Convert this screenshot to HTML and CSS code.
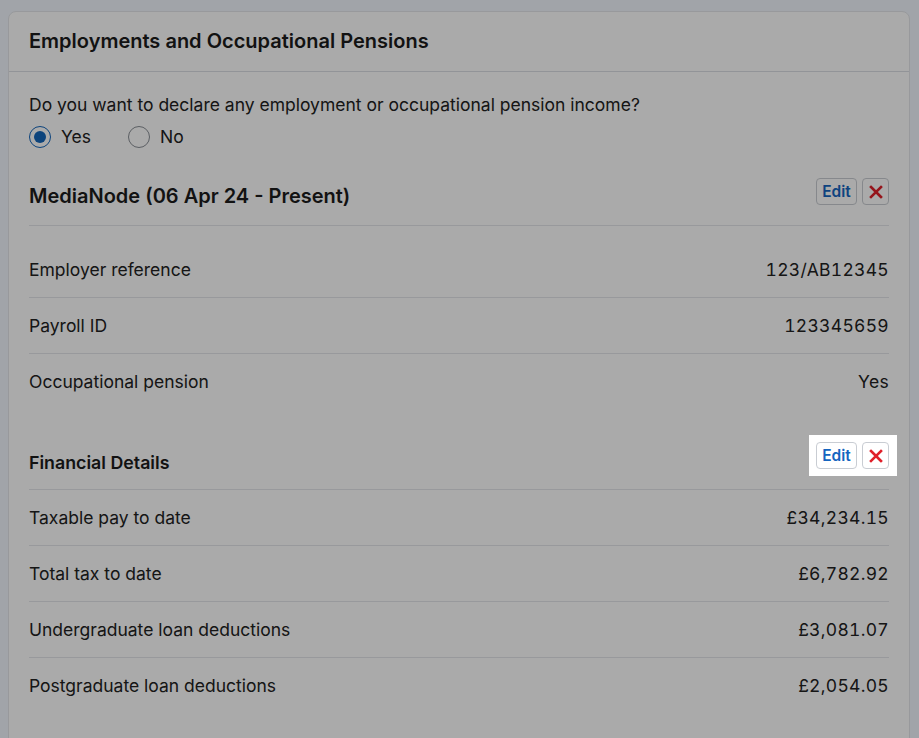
FILE: index.html
```html
<!DOCTYPE html>
<html lang="en">
<head>
    <meta charset="UTF-8">
    <meta name="viewport" content="width=device-width, initial-scale=1.0">
    <title>Employments and Occupational Pensions</title>
    <link rel="stylesheet" href="styles.css">
</head>
<body>

<div class="card">
    <div class="card-header">
        <h2>Employments and Occupational Pensions</h2>
    </div>

    <div class="card-body">
        <p class="question">Do you want to declare any employment or occupational pension income?</p>
        <div class="radio-group">
            <label class="radio"><span class="radio-dot checked"></span> Yes</label>
            <label class="radio"><span class="radio-dot"></span> No</label>
        </div>

        <div class="employment-head">
            <h3>MediaNode (06 Apr 24 - Present)</h3>
            <div class="actions">
                <button class="btn-edit">Edit</button>
                <button class="btn-remove" aria-label="Remove">
                    <svg width="14" height="14" viewBox="0 0 14 14"><path d="M2 2L12 12M12 2L2 12" stroke="currentColor" stroke-width="2.6" stroke-linecap="square"/></svg>
                </button>
            </div>
        </div>

        <div class="detail-list first">
            <div class="detail-row"><span>Employer reference</span><span class="value">123/AB12345</span></div>
            <div class="detail-row"><span>Payroll ID</span><span class="value">123345659</span></div>
            <div class="detail-row"><span>Occupational pension</span><span class="value">Yes</span></div>
        </div>

        <div class="section-head">
            <h4>Financial Details</h4>
            <div class="actions spotlight">
                <button class="btn-edit">Edit</button>
                <button class="btn-remove" aria-label="Remove">
                    <svg width="14" height="14" viewBox="0 0 14 14"><path d="M2 2L12 12M12 2L2 12" stroke="currentColor" stroke-width="2.6" stroke-linecap="square"/></svg>
                </button>
            </div>
        </div>

        <div class="detail-list">
            <div class="detail-row"><span>Taxable pay to date</span><span class="value">£34,234.15</span></div>
            <div class="detail-row"><span>Total tax to date</span><span class="value">£6,782.92</span></div>
            <div class="detail-row"><span>Undergraduate loan deductions</span><span class="value">£3,081.07</span></div>
            <div class="detail-row"><span>Postgraduate loan deductions</span><span class="value">£2,054.05</span></div>
        </div>
    </div>
</div>

</body>
</html>
```

FILE: styles.css
```css
body {
    font-family: 'Inter', 'Liberation Sans', sans-serif;
    margin: 0;
    padding: 11px 9px 0 8px;
    background-color: #f2f6fe;
    color: #222;
    overflow: hidden;
    height: 100vh;
    box-sizing: border-box;
}
.card {
    background-color: #fff;
    border: 1px solid #e4e6ea;
    border-radius: 8px;
    height: 760px;
}
.card-header {
    height: 59px;
    border-bottom: 1px solid #dcdfe4;
    padding: 0 20px;
    display: flex;
    align-items: center;
}
h2 {
    margin: 0 0 2px;
    font-size: 20px;
    font-weight: 600;
    color: #1b1b1b;
}
.card-body {
    padding: 0 20px;
}
.question {
    margin: 22px 0 0;
    font-size: 17.5px;
    line-height: 22px;
}
.radio-group {
    display: flex;
    gap: 37px;
    margin-top: 10px;
}
.radio {
    display: flex;
    align-items: center;
    gap: 10px;
    font-size: 17.5px;
    line-height: 22px;
}
.radio-dot {
    width: 20px;
    height: 20px;
    border: 1px solid #8a8f96;
    border-radius: 50%;
    box-sizing: content-box;
    position: relative;
}
.radio-dot.checked {
    border-color: #1466bb;
}
.radio-dot.checked::after {
    content: "";
    position: absolute;
    left: 4px;
    top: 4px;
    width: 12px;
    height: 12px;
    border-radius: 50%;
    background-color: #1466bb;
}
.employment-head,
.section-head {
    display: flex;
    justify-content: space-between;
    align-items: center;
    border-bottom: 1px solid #e4e6ea;
}
.employment-head {
    height: 65px;
    padding-top: 5px;
    box-sizing: border-box;
    margin-top: 13px;
}
h3 {
    margin: 0;
    font-size: 20px;
    font-weight: 600;
    color: #1b1b1b;
}
h4 {
    margin: 0;
    font-size: 17.8px;
    font-weight: 600;
    color: #1b1b1b;
}
.section-head {
    height: 54px;
    margin-top: 26px;
}
.actions {
    display: flex;
    gap: 5px;
}
.actions button {
    height: 27px;
    background-color: #fff;
    border: 1px solid #c9cdd3;
    border-radius: 4px;
    padding: 0;
    cursor: pointer;
    display: flex;
    align-items: center;
    justify-content: center;
}
.btn-edit {
    width: 41px;
    font-family: 'Inter', sans-serif;
    font-size: 15.5px;
    font-weight: 600;
    color: #1565c0;
}
.btn-remove {
    width: 27px;
    color: #e0202a;
}
.employment-head .actions {
    margin-top: -8px;
}
.spotlight {
    position: relative;
    z-index: 10;
    align-self: flex-start;
    margin-top: 0;
    background-color: #fff;
    padding: 7px 8px 7px 7px;
    margin-right: -8px;
    box-shadow: 0 0 0 3000px rgba(0, 0, 0, 0.333);
}
.detail-list.first {
    margin-top: 16px;
}
.detail-row {
    display: flex;
    justify-content: space-between;
    align-items: center;
    height: 55px;
    font-size: 17.5px;
    border-bottom: 1px solid #e4e6ea;
}
.detail-row:last-child {
    border-bottom: none;
}
.value {
    font-variant-numeric: tabular-nums;
    letter-spacing: 0.3px;
}
```
